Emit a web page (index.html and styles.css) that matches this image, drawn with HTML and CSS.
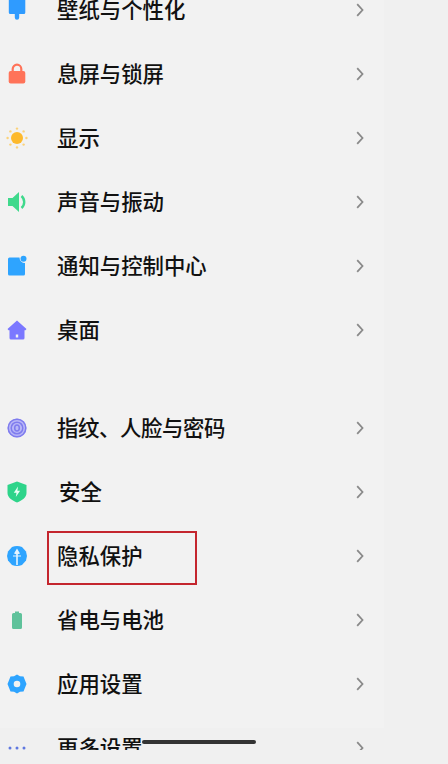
FILE: index.html
```html
<!DOCTYPE html>
<html lang="zh-CN">
<head>
  <meta charset="UTF-8">
  <title>设置</title>
  <link rel="stylesheet" href="styles.css">
</head>
<body>

  <div class="screen">
    <div class="panel">

      <div class="group">
        <div class="row">
          <svg class="icon" viewBox="0 0 20 20"><path fill="#2f9bff" d="M1.800 -4h16.500v16.500a1.500 1.500 0 0 1-1.500 1.500h-4.600v3.500a2.200 2.200 0 0 1-4.400 0V14H3.300a1.500 1.500 0 0 1-1.500-1.500z"/></svg>
          <span class="name">壁纸与个性化</span>
          <svg class="arrow" viewBox="0 0 8 14"><path d="M1.200 1.200 6.500 7l-5.300 5.800"/></svg>
        </div>
        <div class="row">
          <svg class="icon" viewBox="0 0 20 20"><path fill="none" stroke="#ff7359" stroke-width="2.200" d="M5.700 9V5a4.300 4.300 0 0 1 8.600 0V9"/><rect x="1.700" y="7" width="16.600" height="12.500" rx="2" fill="#ff7359"/></svg>
          <span class="name">息屏与锁屏</span>
          <svg class="arrow" viewBox="0 0 8 14"><path d="M1.200 1.200 6.500 7l-5.300 5.800"/></svg>
        </div>
        <div class="row">
          <svg class="icon" viewBox="0 0 20 20"><circle cx="10" cy="10" r="6" fill="#fdb92c"/><g fill="#fbd27a"><circle cx="10" cy="0.600" r="1.200"/><circle cx="10" cy="19.400" r="1.200"/><circle cx="0.600" cy="10" r="1.200"/><circle cx="19.400" cy="10" r="1.200"/><circle cx="3.400" cy="3.400" r="1.200"/><circle cx="16.600" cy="3.400" r="1.200"/><circle cx="3.400" cy="16.600" r="1.200"/><circle cx="16.600" cy="16.600" r="1.200"/></g></svg>
          <span class="name">显示</span>
          <svg class="arrow" viewBox="0 0 8 14"><path d="M1.200 1.200 6.500 7l-5.300 5.800"/></svg>
        </div>
        <div class="row">
          <svg class="icon" viewBox="0 0 20 20"><path fill="#3fd98c" d="M1 6h4.500L12 0v20l-6.500-6H1z"/><path fill="none" stroke="#3fd98c" stroke-width="2.400" d="M14.500 4a8 8 0 0 1 0 12"/></svg>
          <span class="name">声音与振动</span>
          <svg class="arrow" viewBox="0 0 8 14"><path d="M1.200 1.200 6.500 7l-5.300 5.800"/></svg>
        </div>
        <div class="row">
          <svg class="icon" viewBox="0 0 20 20"><path fill="#2ea4ff" d="M2.500 1.500H12.500a5.500 5.500 0 0 0 5.500 5.500v11a1.500 1.500 0 0 1-1.500 1.500H2.500A1.500 1.500 0 0 1 1 18V3a1.500 1.500 0 0 1 1.500-1.500z"/><circle cx="16.500" cy="2.800" r="3" fill="#2ea4ff"/></svg>
          <span class="name">通知与控制中心</span>
          <svg class="arrow" viewBox="0 0 8 14"><path d="M1.200 1.200 6.500 7l-5.300 5.800"/></svg>
        </div>
        <div class="row">
          <svg class="icon" viewBox="0 0 20 20"><path fill="#7b78ff" fill-rule="evenodd" d="M10 .5 19.500 9l-1 1.200H17.500v7.800a1.500 1.500 0 0 1-1.500 1.500H4A1.500 1.500 0 0 1 2.500 18v-7.800H1.500L.5 9zM8.800 14.500v3h2.400v-3z"/></svg>
          <span class="name">桌面</span>
          <svg class="arrow" viewBox="0 0 8 14"><path d="M1.200 1.200 6.500 7l-5.300 5.800"/></svg>
        </div>
      </div>

      <div class="group">
        <div class="row">
          <svg class="icon" viewBox="0 0 20 20"><circle cx="10" cy="10" r="9.500" fill="#b9b7f7"/><g fill="none" stroke="#7f7cee" stroke-width="1.500"><circle cx="10" cy="10" r="8.800"/><circle cx="10" cy="10" r="5.800"/><ellipse cx="10" cy="10" rx="2.300" ry="3"/></g></svg>
          <span class="name name-tight">指纹、人脸与密码</span>
          <svg class="arrow" viewBox="0 0 8 14"><path d="M1.200 1.200 6.500 7l-5.300 5.800"/></svg>
        </div>
        <div class="row">
          <svg class="icon" viewBox="0 0 20 20"><path fill="#2ed48a" d="M10 -.5l9.500 3.500v8c0 4.500-4.500 7.500-9.500 9.500C5 18.500.5 15.500.5 11V3z"/><path fill="#e9fff5" d="M11 4.500 6.800 10.800h2.700L8.800 15l4.300-6.200h-2.700z"/></svg>
          <span class="name name-shift">安全</span>
          <svg class="arrow" viewBox="0 0 8 14"><path d="M1.200 1.200 6.500 7l-5.300 5.800"/></svg>
        </div>
        <div class="row">
          <svg class="icon" viewBox="0 0 20 20"><path fill="#2ea4ff" d="M5 1Q10-.8 15 1L19 5.500 20 10 19 14.500 15 19Q10 20.800 5 19L1 14.500 0 10 1 5.500z"/><path fill="#e6f4ff" d="M10 2.500 13 7.500 10.800 8.200V9.500H14V10.500H10.800V19H9.200V10.500H6V9.500H9.200V8.200L7 7.500z"/></svg>
          <span class="name">隐私保护</span>
          <svg class="arrow" viewBox="0 0 8 14"><path d="M1.200 1.200 6.500 7l-5.300 5.800"/></svg>
        </div>
        <div class="row">
          <svg class="icon" viewBox="0 0 20 20"><path fill="#5fc29b" d="M8 1.500h4V3h1.500A1.500 1.500 0 0 1 15 4.500v13a1.500 1.500 0 0 1-1.500 1.500h-7A1.500 1.500 0 0 1 5 17.500v-13A1.500 1.500 0 0 1 6.500 3H8z"/></svg>
          <span class="name">省电与电池</span>
          <svg class="arrow" viewBox="0 0 8 14"><path d="M1.200 1.200 6.500 7l-5.300 5.800"/></svg>
        </div>
        <div class="row">
          <svg class="icon" viewBox="0 0 20 20"><path fill="#2ea4ff" fill-rule="evenodd" d="M10 .5l3 1.800 3.500.2 1.300 3.200L19.500 10l-1.700 4.300-1.300 3.200-3.500.2-3 1.800-3-1.800-3.500-.2-1.300-3.200L.5 10l1.700-4.300 1.300-3.200 3.500-.2zM10 6.700a3.300 3.300 0 1 0 0 6.600 3.300 3.300 0 0 0 0-6.600z"/></svg>
          <span class="name">应用设置</span>
          <svg class="arrow" viewBox="0 0 8 14"><path d="M1.200 1.200 6.500 7l-5.300 5.800"/></svg>
        </div>
        <div class="row">
          <svg class="icon" viewBox="0 0 20 20"><g fill="#5f78e0"><circle cx="3" cy="10" r="1.500"/><circle cx="10" cy="10" r="1.500"/><circle cx="17" cy="10" r="1.500"/></g></svg>
          <span class="name">更多设置</span>
          <svg class="arrow" viewBox="0 0 8 14"><path d="M1.200 1.200 6.500 7l-5.300 5.800"/></svg>
        </div>
      </div>

    </div>
    <div class="home-bar"></div>
  </div>

  <div class="mark"></div>

</body>
</html>
```

FILE: styles.css
```css
html, body {
  margin: 0;
  height: 100%;
  overflow: hidden;
}

body {
  position: relative;
  font-family: 'Noto Sans CJK SC', 'Liberation Sans', sans-serif;
  background: #f0f0f0;
}

.screen {
  position: relative;
  height: 750px;
  overflow: hidden;
}

.panel {
  width: 384px;
  height: 100%;
  margin-top: -22px;
  background: #f2f2f2;
}

.group {
  margin-bottom: 34px;
}

.row {
  display: flex;
  align-items: center;
  height: 64px;
  padding-left: 7px;
  padding-right: 20px;
}

.icon {
  flex: none;
  width: 20px;
  height: 20px;
  overflow: visible;
}

.name {
  flex: 1;
  margin-left: 30px;
  padding-bottom: 2px;
  font-size: 21.4px;
  font-weight: 500;
  line-height: 28px;
  color: #111;
}

.name-shift {
  margin-left: 32px;
}

.name-tight {
  letter-spacing: -0.4px;
}

.arrow {
  flex: none;
  width: 8px;
  height: 14px;
}

.arrow path {
  fill: none;
  stroke: #8a8a8a;
  stroke-width: 1.800;
}

.home-bar {
  position: absolute;
  left: 142px;
  top: 740px;
  width: 114px;
  height: 4px;
  border-radius: 2px;
  background: #333;
}

.mark {
  position: absolute;
  left: 47px;
  top: 531px;
  width: 146px;
  height: 50px;
  border: 2px solid #c4262e;
}
```
